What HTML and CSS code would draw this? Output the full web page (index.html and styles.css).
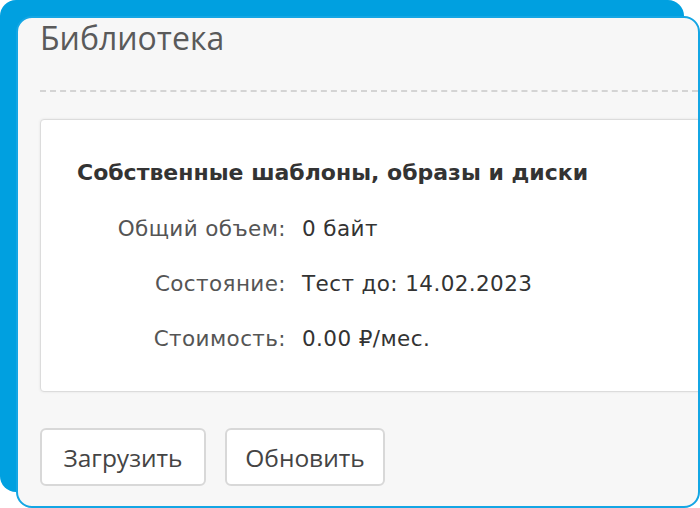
FILE: index.html
```html
<!DOCTYPE html>
<html lang="ru">
<head>
  <meta charset="UTF-8" />
  <meta name="viewport" content="width=device-width, initial-scale=1.0"/>
  <title>Библиотека</title>
  <link rel="stylesheet" href="styles.css">
</head>
<body>
  <div class="scene">
    <div class="stage">
      <section class="panel">
        <header class="panel-head">
          <h1>Библиотека</h1>
        </header>

        <div class="card">
          <h3>Собственные шаблоны, образы и диски</h3>
          <dl class="info">
            <dt>Общий объем:</dt>
            <dd>0 байт</dd>
            <dt>Состояние:</dt>
            <dd>Тест до: 14.02.2023</dd>
            <dt>Стоимость:</dt>
            <dd>0.00 ₽/мес.</dd>
          </dl>
        </div>

        <div class="actions">
          <button class="btn btn-upload">Загрузить</button>
          <button class="btn btn-refresh">Обновить</button>
        </div>
      </section>
    </div>
  </div>
</body>
</html>
```

FILE: styles.css
```css
:root {
  --blue: #00a0e0;
  --panel: #f7f7f7;
  --line: #d4d4d4;
  --text: #333333;
  --muted: #555555;
}

body {
  margin: 0;
  background: #ffffff;
  font-family: "DejaVu Sans", Verdana, sans-serif;
  color: var(--text);
}

.scene {
  width: 700px;
  height: 508px;
  overflow: hidden;
}

.stage {
  width: 684px;
  height: 492px;
  box-sizing: border-box;
  padding: 16px 0 0 16px;
  background: var(--blue);
  border-radius: 16px;
}

.panel {
  width: 684px;
  height: 492px;
  box-sizing: border-box;
  padding: 0 0 0 22px;
  background: var(--panel);
  border: 2px solid #14a6e4;
  border-radius: 16px;
  overflow: hidden;
}

.panel-head {
  border-bottom: 2px dashed var(--line);
  padding: 0 0 32px;
}

.panel-head h1 {
  margin: 0;
  font-family: "Open Sans", sans-serif;
  font-weight: 400;
  font-size: 32px;
  line-height: 40px;
  color: #5a5a5a;
}

.card {
  margin: 27px -10px 0 0;
  height: 273px;
  box-sizing: border-box;
  padding: 39px 0 0 36px;
  background: #ffffff;
  border: 1px solid #dcdcdc;
  border-radius: 4px;
  box-shadow: 0 0 3px rgba(0, 0, 0, 0.08);
}

.card h3 {
  margin: 0;
  font-size: 22px;
  line-height: 28px;
  font-weight: bold;
  color: var(--text);
}

.info {
  display: grid;
  grid-template-columns: 209px 1fr;
  column-gap: 16px;
  row-gap: 27px;
  margin: 28px 0 0;
  font-size: 21.5px;
  line-height: 28px;
  letter-spacing: 0.4px;
}

.info dt {
  text-align: right;
  color: var(--muted);
}

.info dd {
  margin: 0;
  color: var(--text);
}

.actions {
  display: flex;
  gap: 19px;
  margin-top: 36px;
}

.btn {
  height: 58px;
  padding: 0;
  background: #ffffff;
  border: 2px solid #d8d8d8;
  border-radius: 6px;
  font-family: "Open Sans", sans-serif;
  font-size: 24.5px;
  color: #444444;
  cursor: pointer;
}

.btn-upload {
  width: 166px;
}

.btn-refresh {
  width: 160px;
}
```
